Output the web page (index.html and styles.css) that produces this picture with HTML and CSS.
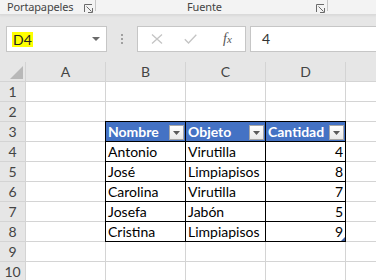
FILE: index.html
```html
<!DOCTYPE html>
<html lang="es">
<head>
<meta charset="utf-8">
<link rel="stylesheet" href="styles.css">
</head>
<body>
<div class="ribbon">
  <div class="group g-clip">
    <span class="glabel">Portapapeles</span>
    <svg class="launch" width="9" height="9" viewBox="0 0 9 9"><path d="M0.5 8V0.5H8" fill="none" stroke="#6a6a6a"/><path d="M2.5 2.5L7.5 7.5M8.5 4V8.5H4" fill="none" stroke="#6a6a6a"/></svg>
    <span class="sep"></span>
  </div>
  <div class="group g-font">
    <span class="glabel">Fuente</span>
    <svg class="launch" width="9" height="9" viewBox="0 0 9 9"><path d="M0.5 8V0.5H8" fill="none" stroke="#6a6a6a"/><path d="M2.5 2.5L7.5 7.5M8.5 4V8.5H4" fill="none" stroke="#6a6a6a"/></svg>
    <span class="sep"></span>
  </div>
</div>
<div class="fbar">
  <div class="namebox"><span class="ref">D4</span><svg class="nb-arrow" width="8" height="4" viewBox="0 0 8 4"><path d="M0 0H8L4 4Z" fill="#6a6a6a"/></svg></div>
  <div class="dots"><i></i><i></i><i></i></div>
  <div class="fbtns">
    <svg class="ic-x" width="12" height="10" viewBox="0 0 12 10"><path d="M1 0.5L11 9.5M11 0.5L1 9.5" stroke="#c4c4c4" stroke-width="1.3" fill="none"/></svg>
    <svg class="ic-ok" width="13" height="10" viewBox="0 0 13 10"><path d="M0.8 5.2L4.5 9L12.3 0.8" stroke="#c4c4c4" stroke-width="1.3" fill="none"/></svg>
    <span class="fx">f<span class="fx-x">x</span></span>
  </div>
  <div class="finput">4</div>
</div>
<div class="sheet">
  <div class="c h corner"><svg width="14" height="13" viewBox="0 0 14 13"><path d="M13 0V13H0Z" fill="#b8b8b8"/></svg></div>
  <div class="c h">A</div><div class="c h">B</div><div class="c h">C</div><div class="c h">D</div><div class="c h"></div>

  <div class="c h">1</div><div class="c"></div><div class="c"></div><div class="c"></div><div class="c"></div><div class="c"></div>
  <div class="c h">2</div><div class="c"></div><div class="c"></div><div class="c"></div><div class="c"></div><div class="c"></div>

  <div class="c h">3</div><div class="c"></div>
  <div class="c t th"><span>Nombre</span><span class="fb"><svg width="7" height="4" viewBox="0 0 7 4"><path d="M0 0H7L3.5 4Z" fill="#5a5a5a"/></svg></span></div>
  <div class="c t th"><span>Objeto</span><span class="fb"><svg width="7" height="4" viewBox="0 0 7 4"><path d="M0 0H7L3.5 4Z" fill="#5a5a5a"/></svg></span></div>
  <div class="c t th"><span>Cantidad</span><span class="fb"><svg width="7" height="4" viewBox="0 0 7 4"><path d="M0 0H7L3.5 4Z" fill="#5a5a5a"/></svg></span></div>
  <div class="c"></div>

  <div class="c h">4</div><div class="c"></div><div class="c t">Antonio</div><div class="c t">Virutilla</div><div class="c t num">4</div><div class="c"></div>
  <div class="c h">5</div><div class="c"></div><div class="c t">José</div><div class="c t">Limpiapisos</div><div class="c t num">8</div><div class="c"></div>
  <div class="c h">6</div><div class="c"></div><div class="c t">Carolina</div><div class="c t">Virutilla</div><div class="c t num">7</div><div class="c"></div>
  <div class="c h">7</div><div class="c"></div><div class="c t">Josefa</div><div class="c t">Jabón</div><div class="c t num">5</div><div class="c"></div>
  <div class="c h">8</div><div class="c"></div><div class="c t">Cristina</div><div class="c t">Limpiapisos</div><div class="c t num last">9</div><div class="c"></div>

  <div class="c h">9</div><div class="c"></div><div class="c"></div><div class="c"></div><div class="c"></div><div class="c"></div>
  <div class="c h">10</div><div class="c"></div><div class="c"></div><div class="c"></div><div class="c"></div><div class="c"></div>
</div>
</body>
</html>
```

FILE: styles.css
```css
* { box-sizing: border-box; }
html, body { margin: 0; padding: 0; }
body {
  width: 376px;
  height: 280px;
  overflow: hidden;
  background: #e6e6e6;
  font-family: Lato, "Liberation Sans", sans-serif;
}

/* ribbon group labels */
.ribbon {
  display: flex;
  height: 15px;
  background: #f3f3f3;
  border-bottom: 1px solid #dadada;
  box-shadow: 0 1px 2px rgba(0,0,0,0.06);
}
.group {
  display: flex;
  align-items: flex-start;
  height: 14px;
  font-family: "Noto Sans", sans-serif;
  font-size: 11px;
  line-height: 13px;
  letter-spacing: -0.15px;
  color: #444;
}
.g-clip { width: 96px; padding-left: 7px; }
.g-font { width: 232px; padding-left: 91px; }
.glabel { display: block; }
.launch { margin-left: auto; margin-right: 2px; margin-top: 4px; }
.sep { width: 1px; height: 11px; background: #c6c6c6; }

/* formula bar */
.fbar {
  display: flex;
  align-items: flex-start;
  height: 47px;
  padding-top: 11px;
}
.namebox {
  display: flex;
  align-items: center;
  width: 101px;
  height: 26px;
  margin-left: 6px;
  padding-left: 5px;
  padding-right: 6px;
  background: #fff;
  border: 1px solid #c6c6c6;
  font-size: 14px;
  color: #222;
}
.ref { background: #ffff00; padding: 0 1px; line-height: 15px; }
.nb-arrow { margin-left: auto; }
.dots {
  display: flex;
  flex-direction: column;
  gap: 2px;
  margin-left: 14px;
  margin-top: 8px;
}
.dots i { display: block; width: 2px; height: 2px; background: #a0a0a0; }
.fbtns {
  display: flex;
  align-items: center;
  width: 109px;
  height: 26px;
  margin-left: 14px;
  padding-left: 13px;
  background: #fff;
  border: 1px solid #c6c6c6;
}
.ic-ok { margin-left: 21px; }
.fx {
  margin-left: 26px;
  font-family: "Liberation Serif", serif;
  font-style: italic;
  font-size: 14px;
  color: #555;
}
.fx-x { font-size: 11px; }
.finput {
  flex: 1;
  height: 26px;
  margin-left: 4px;
  padding-left: 11px;
  background: #fff;
  border: 1px solid #c6c6c6;
  border-right: none;
  font-size: 14px;
  line-height: 24px;
  color: #333;
}

/* sheet grid */
.sheet {
  display: grid;
  grid-template-columns: 25px 79px 79px 79px 79px 1fr;
  grid-auto-rows: 19px;
  gap: 1px;
  background: #d4d4d4;
}
.c {
  position: relative;
  background: #fff;
  font-size: 14px;
  line-height: 19px;
  color: #000;
  padding: 0 2px;
  white-space: nowrap;
  overflow: hidden;
}
.h {
  background: #e6e6e6;
  color: #444;
  text-align: center;
  padding: 0;
}
.corner {
  display: flex;
  justify-content: flex-end;
  align-items: flex-end;
  padding: 0 1px 2px 0;
}
.corner svg { display: block; }
.t { box-shadow: 0 0 0 1px #000; overflow: visible; }
.th {
  display: flex;
  align-items: center;
  background: #4472c4;
  color: #fff;
  font-weight: bold;
  padding-right: 1px;
}
.fb {
  display: flex;
  align-items: center;
  justify-content: center;
  width: 15px;
  height: 15px;
  margin-left: auto;
  margin-top: 2px;
  border: 1px solid #a6a6a6;
  background: linear-gradient(#ffffff, #e9e9e9);
}
.fb svg { display: block; }
.num { text-align: right; }
.last::after {
  content: "";
  position: absolute;
  right: 0;
  bottom: 0;
  border-style: solid;
  border-width: 0 0 4px 4px;
  border-color: transparent transparent #3f5f9f transparent;
}
```
